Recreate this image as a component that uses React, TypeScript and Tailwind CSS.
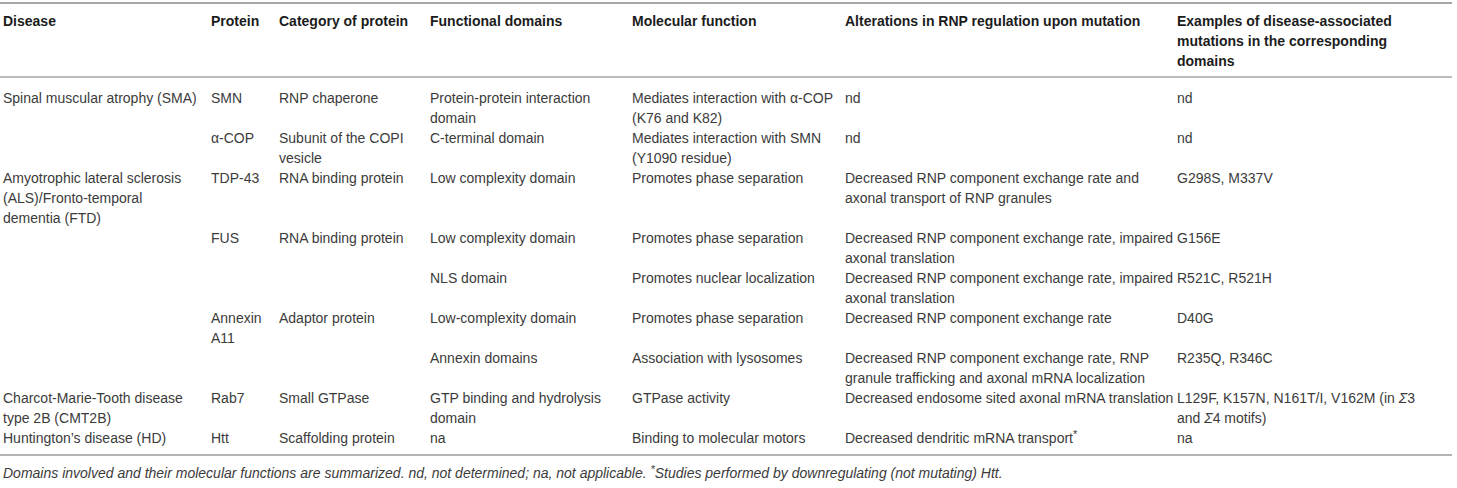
import type { ReactNode } from "react";

type Row = ReactNode[];

const headers = [
  "Disease",
  "Protein",
  "Category of protein",
  "Functional domains",
  "Molecular function",
  "Alterations in RNP regulation upon mutation",
  "Examples of disease-associated\nmutations in the corresponding\ndomains",
];

const rows: Row[] = [
  [
    "Spinal muscular atrophy (SMA)",
    "SMN",
    "RNP chaperone",
    "Protein-protein interaction\ndomain",
    "Mediates interaction with α-COP\n(K76 and K82)",
    "nd",
    "nd",
  ],
  [
    "",
    "α-COP",
    "Subunit of the COPI\nvesicle",
    "C-terminal domain",
    "Mediates interaction with SMN\n(Y1090 residue)",
    "nd",
    "nd",
  ],
  [
    "Amyotrophic lateral sclerosis\n(ALS)/Fronto-temporal\ndementia (FTD)",
    "TDP-43",
    "RNA binding protein",
    "Low complexity domain",
    "Promotes phase separation",
    "Decreased RNP component exchange rate and\naxonal transport of RNP granules",
    "G298S, M337V",
  ],
  [
    "",
    "FUS",
    "RNA binding protein",
    "Low complexity domain",
    "Promotes phase separation",
    "Decreased RNP component exchange rate, impaired\naxonal translation",
    "G156E",
  ],
  [
    "",
    "",
    "",
    "NLS domain",
    "Promotes nuclear localization",
    "Decreased RNP component exchange rate, impaired\naxonal translation",
    "R521C, R521H",
  ],
  [
    "",
    "Annexin\nA11",
    "Adaptor protein",
    "Low-complexity domain",
    "Promotes phase separation",
    "Decreased RNP component exchange rate",
    "D40G",
  ],
  [
    "",
    "",
    "",
    "Annexin domains",
    "Association with lysosomes",
    "Decreased RNP component exchange rate, RNP\ngranule trafficking and axonal mRNA localization",
    "R235Q, R346C",
  ],
  [
    "Charcot-Marie-Tooth disease\ntype 2B (CMT2B)",
    "Rab7",
    "Small GTPase",
    "GTP binding and hydrolysis\ndomain",
    "GTPase activity",
    "Decreased endosome sited axonal mRNA translation",
    <>
      L129F, K157N, N161T/I, V162M (in <i>Σ</i>3
      <br />
      and <i>Σ</i>4 motifs)
    </>,
  ],
  [
    "Huntington’s disease (HD)",
    "Htt",
    "Scaffolding protein",
    "na",
    "Binding to molecular motors",
    <>
      Decreased dendritic mRNA transport<sup className="text-[11px]">*</sup>
    </>,
    "na",
  ],
];

const colWidths = ["w-[211px]", "w-[68px]", "w-[151px]", "w-[202px]", "w-[213px]", "w-[332px]", "w-auto"];

export default function App() {
  return (
    <div className="w-[1457px] h-[488px] bg-white pt-[2px] font-['Liberation_Sans',Arial,sans-serif] text-[14px] leading-[20px]">
      <table className="w-[1452px] table-fixed border-collapse">
        <colgroup>
          {colWidths.map((w, i) => (
            <col key={i} className={w} />
          ))}
        </colgroup>
        <thead>
          <tr className="border-t-2 border-b-2 border-t-[#a6a6a6] border-b-[#bcbcbc]">
            {headers.map((h, i) => (
              <th
                key={i}
                className={
                  "text-left align-top font-bold text-[#1c1c1c] whitespace-pre pt-[7px] pb-[5px] " +
                  (i === 0 ? "pl-[3px]" : "")
                }
              >
                {h}
              </th>
            ))}
          </tr>
        </thead>
        <tbody className="text-[#3b3b3b]">
          {rows.map((row, r) => (
            <tr key={r} className={r === rows.length - 1 ? "border-b-2 border-b-[#b4b4b4]" : ""}>
              {row.map((cell, c) => (
                <td
                  key={c}
                  className={
                    "align-top whitespace-pre p-0 " +
                    (c === 0 ? "pl-[3px] " : "") +
                    (r === 0 ? "pt-[10px] " : "") +
                    (r === rows.length - 1 ? "pb-[6px]" : "")
                  }
                >
                  {cell}
                </td>
              ))}
            </tr>
          ))}
        </tbody>
      </table>
      <p className="pl-[3px] pt-[7px] italic text-[#3b3b3b]">
        Domains involved and their molecular functions are summarized. nd, not determined; na, not applicable.{" "}
        <sup className="text-[11px]">*</sup>Studies performed by downregulating (not mutating) Htt.
      </p>
    </div>
  );
}
